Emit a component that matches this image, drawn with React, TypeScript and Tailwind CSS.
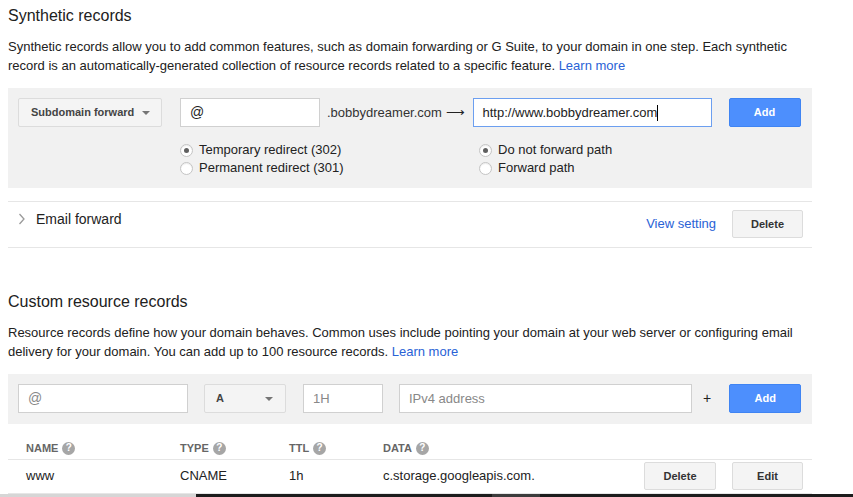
import React from "react";

const font = { fontFamily: '"Liberation Sans", Arial, sans-serif' };

function Caret() {
  return (
    <svg width="8" height="4" viewBox="0 0 8 4" className="shrink-0">
      <path d="M0 0 L8 0 L4 4 Z" fill="#757575" />
    </svg>
  );
}

function Radio({ checked, label }: { checked?: boolean; label: string }) {
  return (
    <div className="flex items-center h-[18px]">
      <span className="w-[13px] h-[13px] rounded-full border border-[#c4c4c4] bg-white flex items-center justify-center shadow-[inset_0_1px_1px_rgba(0,0,0,0.08)]">
        {checked && <span className="w-[5px] h-[5px] rounded-full bg-[#606060]" />}
      </span>
      <span className="ml-[6px] text-[13px] text-[#222]">{label}</span>
    </div>
  );
}

function Help() {
  return (
    <span className="ml-[4px] inline-flex w-[13px] h-[13px] rounded-full bg-[#a6a6a6] text-white text-[10px] font-bold items-center justify-center leading-none">
      ?
    </span>
  );
}

function GrayButton({ label, w }: { label: string; w: string }) {
  return (
    <button
      className={`${w} h-[28px] bg-[#f4f4f4] border border-[#dcdcdc] rounded-[2px] text-[11px] font-bold text-[#333] shrink-0`}
    >
      {label}
    </button>
  );
}

function BlueButton() {
  return (
    <button className="w-[72px] h-[29px] bg-[#4d8ffd] border border-[#3f84f3] rounded-[2px] text-[11px] font-bold text-white shrink-0">
      Add
    </button>
  );
}

export default function App() {
  return (
    <div className="w-[853px] h-[497px] bg-white overflow-hidden flex flex-col" style={font}>
      <div className="ml-2 w-[804px] flex flex-col">
        <h2 className="pt-[5px] text-[16px] leading-[22px] text-[#212121]">Synthetic records</h2>
        <p className="mt-[10px] text-[13px] leading-[19px] text-[#212121]">
          Synthetic records allow you to add common features, such as domain forwarding or G Suite, to your domain in one step. Each synthetic record is an automatically-generated collection of resource records related to a specific feature.{" "}
          <span className="text-[#2962d6]">Learn more</span>
        </p>

        <div className="mt-[13px] bg-[#f1f1f1] h-[100px] pt-[10px] px-[10px]">
          <div className="flex items-center h-[29px]">
            <button className="w-[144px] h-[29px] bg-[#f4f4f4] border border-[#dcdcdc] rounded-[2px] flex items-center pl-[12px] pr-[11px] justify-between">
              <span className="text-[11px] font-bold text-[#444]">Subdomain forward</span>
              <Caret />
            </button>
            <div className="ml-[18px] w-[140px] h-[29px] bg-white border border-[#d0d0d0] flex items-center px-[9px] text-[14px] text-[#222]">
              @
            </div>
            <span className="ml-[7px] text-[13px] text-[#333] whitespace-nowrap">
              .bobbydreamer.com <span className="text-[#222]">⟶</span>
            </span>
            <div className="ml-[8px] w-[239px] h-[29px] bg-white border border-[#6c9ff0] flex items-center px-[9px] text-[13px] text-[#222]">
              http://www.bobbydreamer.com
              <span className="w-px h-[16px] bg-black" />
            </div>
            <div className="ml-[17px]">
              <BlueButton />
            </div>
          </div>
          <div className="mt-[14px] flex ml-[162px]">
            <div className="w-[299px] flex flex-col">
              <Radio checked label="Temporary redirect (302)" />
              <Radio label="Permanent redirect (301)" />
            </div>
            <div className="flex flex-col">
              <Radio checked label="Do not forward path" />
              <Radio label="Forward path" />
            </div>
          </div>
        </div>

        <div className="mt-[13px] border-t border-b border-[#e6e6e6] h-[47px] flex pt-[8px] pr-[9px]">
          <div className="flex items-center h-[18px] ml-[10px]">
            <svg width="8" height="12" viewBox="0 0 8 12">
              <path d="M1.5 1 L6 6 L1.5 11" fill="none" stroke="#9a9a9a" strokeWidth="1.3" />
            </svg>
            <span className="ml-[10px] text-[14px] text-[#222]">Email forward</span>
          </div>
          <div className="ml-auto flex items-center h-[28px]">
            <span className="text-[13px] text-[#2962d6] mr-[16px] mt-[-1px]">View setting</span>
            <GrayButton label="Delete" w="w-[71px]" />
          </div>
        </div>

        <h2 className="mt-[43px] text-[16px] leading-[22px] text-[#212121]">Custom resource records</h2>
        <p className="mt-[10px] text-[13px] leading-[19px] text-[#212121]">
          Resource records define how your domain behaves. Common uses include pointing your domain at your web server or configuring email delivery for your domain. You can add up to 100 resource records.{" "}
          <span className="text-[#2962d6]">Learn more</span>
        </p>

        <div className="mt-[13px] bg-[#f1f1f1] h-[50px] pt-[10px] px-[10px] flex items-start">
          <div className="w-[170px] h-[29px] bg-white border border-[#d0d0d0] flex items-center px-[9px] text-[14px] text-[#888]">
            @
          </div>
          <button className="ml-[16px] w-[82px] h-[29px] bg-[#f4f4f4] border border-[#dcdcdc] rounded-[2px] flex items-center pl-[11px] pr-[12px] justify-between">
            <span className="text-[11px] font-bold text-[#444]">A</span>
            <Caret />
          </button>
          <div className="ml-[17px] w-[80px] h-[29px] bg-white border border-[#d0d0d0] flex items-center px-[9px] text-[13px] text-[#888]">
            1H
          </div>
          <div className="ml-[16px] w-[293px] h-[29px] bg-white border border-[#d0d0d0] flex items-center px-[9px] text-[13px] text-[#888]">
            IPv4 address
          </div>
          <span className="ml-[11px] h-[29px] flex items-center text-[14px] text-[#222]">+</span>
          <div className="ml-[18px]">
            <BlueButton />
          </div>
        </div>

        <div className="grid grid-cols-[172px_109px_94px_263px_88px_1fr] border-b border-[#e6e6e6] pt-[17px] pb-[4px] text-[11px] leading-[14px] font-bold text-[#666]">
          <div className="pl-[18px] flex items-center">NAME<Help /></div>
          <div className="flex items-center">TYPE<Help /></div>
          <div className="flex items-center">TTL<Help /></div>
          <div className="flex items-center">DATA<Help /></div>
          <div />
          <div />
        </div>
        <div className="grid grid-cols-[172px_109px_94px_261px_88px_1fr] items-center border-b border-[#e6e6e6] pt-[2px] pb-[3px] text-[13px] text-[#222]">
          <div className="pl-[18px]">www</div>
          <div>CNAME</div>
          <div>1h</div>
          <div>c.storage.googleapis.com.</div>
          <div><GrayButton label="Delete" w="w-[72px]" /></div>
          <div><GrayButton label="Edit" w="w-[71px]" /></div>
        </div>
      </div>

      <div className="mt-auto flex h-[3px]">
        <div className="w-[196px] bg-[#d6d6d6]" />
        <div className="w-[296px] bg-[#1c1c1c]" />
        <div className="w-[48px] bg-[#3c3c3c]" />
        <div className="flex-1 bg-[#1c1c1c]" />
      </div>
    </div>
  );
}
